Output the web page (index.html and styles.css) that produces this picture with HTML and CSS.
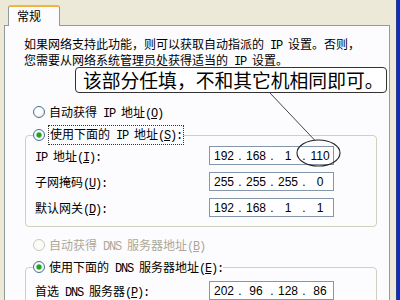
FILE: index.html
```html
<!DOCTYPE html>
<html lang="zh-CN">
<head>
<meta charset="utf-8">
<link rel="stylesheet" href="styles.css">
</head>
<body>
<div class="screen">
  <div class="dialog">
    <div class="tabs"><div class="tab">常规</div></div>
    <div class="panel">
      <p class="intro">如果网络支持此功能，则可以获取自动指派的<span class="en"> IP </span>设置。否则，<br>您需要从网络系统管理员处获得适当的<span class="en"> IP </span>设置。</p>
      <div class="radio-row first"><span class="radio"></span><span>自动获得<span class="en"> IP </span>地址<span class="en">(<u>O</u>)</span></span></div>
      <fieldset class="group">
        <legend><div class="radio-row"><span class="radio checked"></span><span class="focus">使用下面的<span class="en"> IP </span>地址<span class="en">(<u>S</u>):</span></span></div></legend>
        <div class="field-row"><span class="label"><span class="en">IP </span>地址<span class="en">(<u>I</u>):</span></span><div class="ip"><span>192</span><i>.</i><span>168</span><i>.</i><span>1</span><i>.</i><span>110</span></div></div>
        <div class="field-row"><span class="label">子网掩码<span class="en">(<u>U</u>):</span></span><div class="ip"><span>255</span><i>.</i><span>255</span><i>.</i><span>255</span><i>.</i><span>0</span></div></div>
        <div class="field-row"><span class="label">默认网关<span class="en">(<u>D</u>):</span></span><div class="ip"><span>192</span><i>.</i><span>168</span><i>.</i><span>1</span><i>.</i><span>1</span></div></div>
      </fieldset>
      <div class="radio-row dns-auto disabled"><span class="radio"></span><span>自动获得<span class="en"> DNS </span>服务器地址<span class="en">(<u>B</u>)</span></span></div>
      <fieldset class="group group-dns">
        <legend><div class="radio-row"><span class="radio checked"></span><span>使用下面的<span class="en"> DNS </span>服务器地址<span class="en">(<u>E</u>):</span></span></div></legend>
        <div class="field-row"><span class="label">首选<span class="en"> DNS </span>服务器<span class="en">(<u>P</u>):</span></span><div class="ip"><span>202</span><i>.</i><span>96</span><i>.</i><span>128</span><i>.</i><span>86</span></div></div>
        <div class="field-row"><span class="label">备用<span class="en"> DNS </span>服务器<span class="en">(<u>A</u>):</span></span><div class="ip"><span></span><i>.</i><span></span><i>.</i><span></span><i>.</i><span></span></div></div>
      </fieldset>
    </div>
  </div>
  <div class="frame"></div>
  <div class="callout">该部分任填，不和其它机相同即可。</div>
  <svg class="annot" width="400" height="300" viewBox="0 0 400 300">
    <line x1="270" y1="93" x2="315" y2="140.5" stroke="#444" stroke-width="1"/>
    <ellipse cx="318.5" cy="153" rx="21.5" ry="13" fill="none" stroke="#222" stroke-width="1.1"/>
  </svg>
</div>
</body>
</html>
```
FILE: styles.css
```css
* { box-sizing: border-box; }
html, body { margin: 0; padding: 0; }
body {
  width: 400px;
  height: 300px;
  overflow: hidden;
  background: #ECE9D8;
  font-family: "Noto Sans CJK SC", "Noto Sans", sans-serif;
  font-size: 12px;
  color: #000;
}
.en {
  font-family: "Liberation Mono", "DejaVu Sans Mono", monospace;
  font-size: 12px;
  letter-spacing: -1.2px;
}
.screen {
  position: relative;
  display: flex;
  width: 400px;
  height: 300px;
  overflow: hidden;
}
.dialog {
  width: 396px;
  display: flex;
  flex-direction: column;
}
.frame {
  width: 4px;
  background: linear-gradient(to right, #2a3a8c 0 1px, #0b2ec8 1px);
}
.tabs {
  height: 25px;
  padding: 5px 0 0 8px;
  display: flex;
  flex: none;
}
.tab {
  position: relative;
  z-index: 1;
  width: 52px;
  height: 21px;
  margin-bottom: -1px;
  border: 1px solid #919B9C;
  border-top: 2px solid #F3B33E;
  border-bottom: none;
  border-radius: 3px 3px 0 0;
  background: #FCFCFE;
  padding-left: 8px;
  line-height: 18px;
}
.panel {
  flex: 1;
  margin-left: 4px;
  width: 386px;
  border: 1px solid #919B9C;
  border-bottom: none;
  background: #FCFCFE;
  padding: 11px 12px 0 20px;
}
.intro {
  margin: 0 0 0 -1px;
  line-height: 13px;
  white-space: nowrap;
}
.radio-row {
  display: flex;
  align-items: center;
  height: 16px;
  gap: 4px;
  padding-left: 8px;
  white-space: nowrap;
}
.first { margin-top: 35px; }
.radio {
  flex: none;
  width: 12px;
  height: 12px;
  border-radius: 50%;
  border: 1px solid #4a7099;
  background: radial-gradient(circle at 40% 40%, #fff 0 3px, #e6e6e0 7px);
}
.radio.checked {
  background: radial-gradient(circle, #1fa01f 0 2px, #7fce7f 2.6px, #f4f8f4 3.2px, #fff 4px, #e2e2dc 6px);
}
.disabled { color: #ACA899; }
.disabled .radio {
  border-color: #CAC8BB;
  background: #fbfbf9;
}
.group {
  margin: 7px 0 0;
  border: 1px solid #D0D0BF;
  border-radius: 4px;
  padding: 3px 0 9px 7px;
  min-width: 0;
}
.group legend { padding: 0; }
.group .radio-row { padding-left: 0; }
.focus {
  outline: 1px dotted #333;
  padding: 0 1px;
  line-height: 15px;
}
.dns-auto { margin-top: 10px; }
.group-dns { margin-top: 6px; padding-top: 6px; }
.field-row {
  display: flex;
  align-items: center;
  height: 19px;
  padding-left: 2px;
  white-space: nowrap;
}
.field-row + .field-row { margin-top: 7px; }
.label { width: 174px; flex: none; }
.ip {
  flex: none;
  width: 125px;
  height: 19px;
  border: 1px solid #8496aa;
  background: #fff;
  display: flex;
  align-items: center;
  padding-left: 1px;
  font-family: "Liberation Sans", Arial, sans-serif;
  font-size: 12px;
}
.ip span { width: 26px; text-align: center; }
.ip i { width: 6px; font-style: normal; text-align: center; }
.callout {
  position: absolute;
  left: 75px;
  top: 67px;
  width: 312px;
  height: 26px;
  border: 1px solid #333;
  border-radius: 4px;
  background: #fff;
  padding-left: 7px;
  font-size: 18.8px;
  line-height: 24px;
  white-space: nowrap;
  z-index: 2;
}
.annot {
  position: absolute;
  left: 0;
  top: 0;
  z-index: 3;
  pointer-events: none;
}
```
